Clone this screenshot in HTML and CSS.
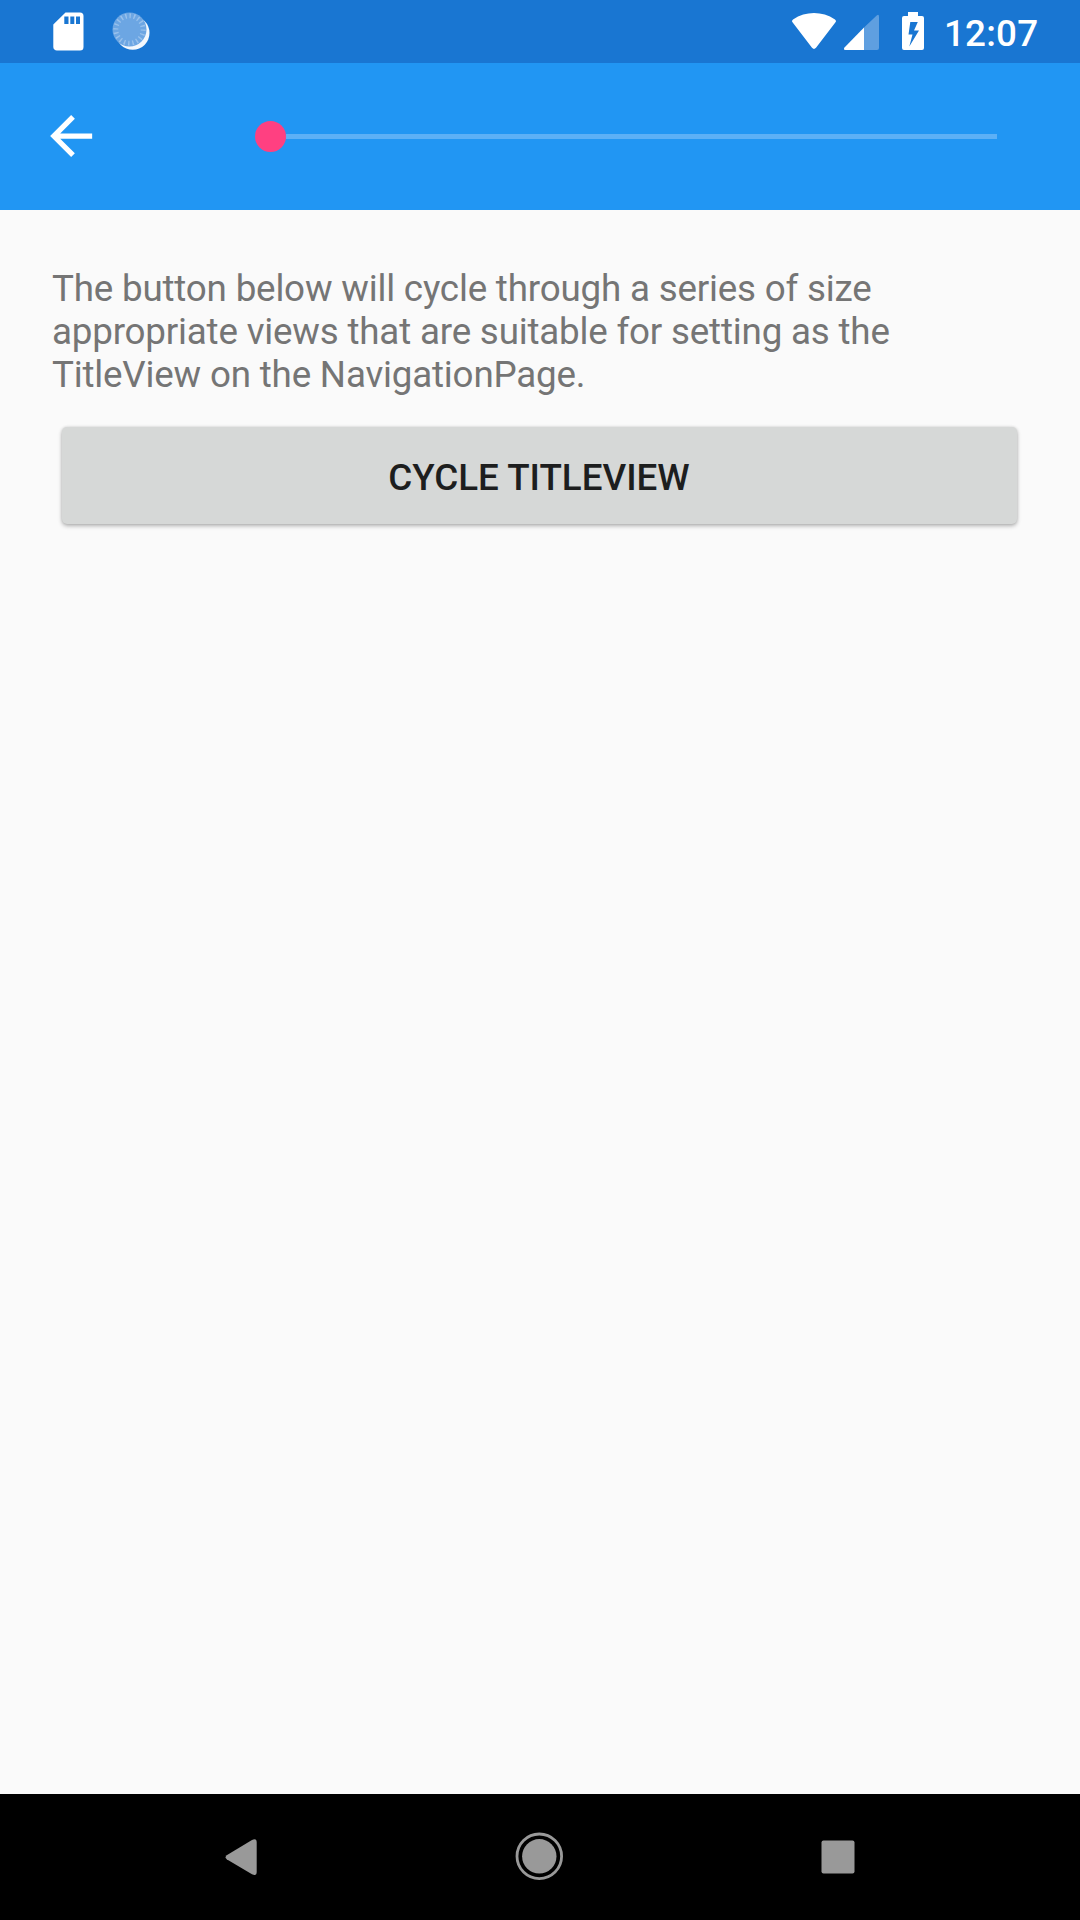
FILE: index.html
```html
<!DOCTYPE html>
<html lang="en">
<head>
<meta charset="utf-8">
<title>TitleView</title>
<link rel="stylesheet" href="styles.css">
</head>
<body>
<div class="screen">
  <header class="status-bar">
    <svg class="status-left" viewBox="0 0 160 63" aria-hidden="true">
      <path fill="#fff" fill-rule="evenodd" d="M65.500 12.500H80a3.500 3.500 0 0 1 3.500 3.500V47a3.500 3.500 0 0 1-3.500 3.500H57A3.500 3.500 0 0 1 53.300 47V24.500ZM64.300 16.500V24H68.500V16.500ZM70.300 16.500V24H74.300V16.500ZM76 16.500V24H80V16.500Z"/>
      <circle cx="132.700" cy="33" r="16.800" fill="#fff" fill-opacity=".95"/>
      <circle cx="129.500" cy="29.500" r="17" fill="#6ca6e3"/>
      <circle class="spinner-ticks" cx="129.500" cy="29.500" r="13.700" pathLength="180"/>
    </svg>
    <div class="status-right">
      <svg class="status-icons" viewBox="780 0 150 63" aria-hidden="true">
        <path fill="#fff" d="M792.500 22.300Q791 20.700 793 19.400C806 10.900 822 10.900 835 19.400Q837 20.700 835.500 22.300L816 47.800Q814 50 812 47.800Z"/>
        <path fill="#5f9fe0" d="M864 27.500L877 15.200Q879 14 879 16.500V48Q879 50 877 50H864Z"/>
        <path fill="#fff" d="M864 27.500V50H845.500Q843 50 844.500 47.500Z"/>
        <path fill="#fff" fill-rule="evenodd" d="M908 12H918V16H922a2 2 0 0 1 2 2V48a2 2 0 0 1-2 2H904a2 2 0 0 1-2-2V18a2 2 0 0 1 2-2H908ZM910.300 22L908.500 34.500H912.500L909.300 46.500L919 30.500H914L917.800 22Z"/>
      </svg>
      <span class="clock">12:07</span>
    </div>
  </header>
  <nav class="app-bar">
    <svg class="back-arrow" viewBox="-.25 -.2 24 24" aria-label="Back"><path fill="#fff" d="M20 11H7.830l5.590-5.590L12 4l-8 8 8 8 1.410-1.410L7.830 13H20v-2z"/></svg>
    <div class="slider"><div class="thumb"></div><div class="track"></div></div>
  </nav>
  <main class="content">
    <p class="description">The button below will cycle through a series of size<br>appropriate views that are suitable for setting as the<br>TitleView on the NavigationPage.</p>
    <button class="cycle-button" type="button">CYCLE TITLEVIEW</button>
  </main>
  <footer class="nav-bar">
    <svg class="nav-icons" viewBox="0 1794 1080 126" aria-hidden="true">
      <g fill="#999">
        <path d="M226.700 1855.300L252 1840Q256.700 1837.800 256.700 1842.500V1872Q256.700 1876.500 252 1874.300L226.700 1859.300Q224.500 1857.300 226.700 1855.300Z"/>
        <circle cx="539.300" cy="1856.300" r="17.200"/>
        <circle cx="539.300" cy="1856.300" r="22.300" fill="none" stroke="#999" stroke-width="2.800"/>
        <rect x="821.500" y="1840.500" width="33" height="33" rx="2"/>
      </g>
    </svg>
  </footer>
</div>
</body>
</html>
```
FILE: styles.css
```css
* { box-sizing: border-box; }
body { margin: 0; font-family: Roboto, sans-serif; font-size: 36.75px; }
svg { display: block; }
.screen { display: flex; flex-direction: column; width: 1080px; height: 1920px; background: #fafafa; }
.status-bar { display: flex; justify-content: space-between; height: 63px; background: #1976d2; }
.status-left { width: 160px; height: 63px; }
.status-right { display: flex; width: 300px; }
.status-icons { flex: none; width: 150px; height: 63px; }
.clock { padding-left: 14px; color: #fff; font-weight: 500; letter-spacing: .2px; line-height: 67px; }
.spinner-ticks { fill: none; stroke: #98c1ec; stroke-width: 5; stroke-dasharray: 3 6; }
.app-bar { display: flex; align-items: center; height: 147px; padding: 0 83px 0 39px; background: #2196f3; }
.back-arrow { flex: none; width: 63px; height: 63px; margin: 0 153px 2px 0; }
.slider { display: flex; flex: 1; align-items: center; }
.thumb { flex: none; width: 31px; height: 31px; border-radius: 50%; background: #ff4081; }
.track { flex: 1; height: 5px; background: #5cb0f6; }
.content { flex: 1; padding: 57px 62px 0 52px; }
.description { margin: 0; color: #757575; letter-spacing: -.19px; line-height: 43px; white-space: nowrap; }
.cycle-button { display: block; width: 955px; height: 97px; margin: 31px 0 0 10px; padding: 4px 1px 0 0; border: 0; border-radius: 5px; background: #d6d8d7; box-shadow: 0 2px 4px rgba(0, 0, 0, .28), 0 0 3px rgba(0, 0, 0, .12); color: #1d1e1e; font: 500 36.75px/43px Roboto, sans-serif; }
.nav-bar { height: 126px; background: #000; }
.nav-icons { width: 1080px; height: 126px; }
```
